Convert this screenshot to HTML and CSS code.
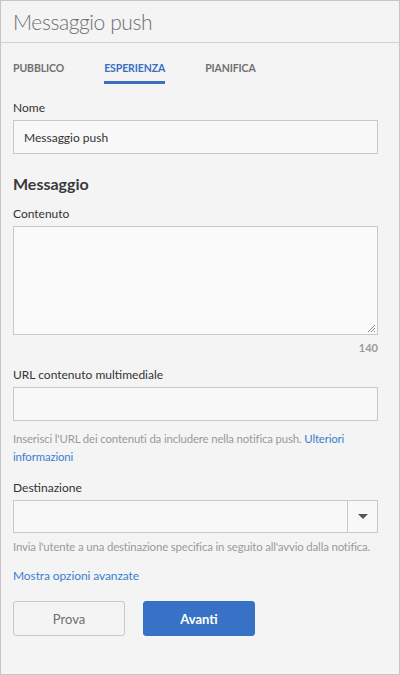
FILE: index.html
```html
<!DOCTYPE html>
<html lang="it">
<head>
<meta charset="utf-8">
<link rel="stylesheet" href="styles.css">
</head>
<body>
<div class="panel">
  <header class="header">
    <h1 class="title">Messaggio push</h1>
  </header>
  <nav class="tabs">
    <span class="tab">PUBBLICO</span>
    <span class="tab active">ESPERIENZA</span>
    <span class="tab">PIANIFICA</span>
  </nav>
  <main class="form">
    <label class="label label-first">Nome</label>
    <div class="input"><span class="value">Messaggio push</span></div>

    <h2 class="section">Messaggio</h2>

    <label class="label label-content">Contenuto</label>
    <div class="textarea">
      <svg class="grip" width="9" height="9" viewBox="0 0 9 9"><path d="M8 1 L1 8 M8 4 L4 8 M8 7 L7 8" stroke="#8a8a8a" stroke-width="1" fill="none"/></svg>
    </div>
    <div class="counter">140</div>

    <label class="label label-url">URL contenuto multimediale</label>
    <div class="input"></div>
    <p class="help">Inserisci l'URL dei contenuti da includere nella notifica push. <a class="link">Ulteriori informazioni</a></p>

    <label class="label label-dest">Destinazione</label>
    <div class="select">
      <div class="select-field"></div>
      <div class="select-btn">
        <svg width="10" height="6" viewBox="0 0 10 6"><path d="M0 0 H10 L5 5 Z" fill="#555"/></svg>
      </div>
    </div>
    <p class="help help-dest">Invia l'utente a una destinazione specifica in seguito all'avvio dalla notifica.</p>

    <a class="link advanced">Mostra opzioni avanzate</a>

    <div class="actions">
      <button class="btn btn-secondary">Prova</button>
      <button class="btn btn-primary">Avanti</button>
    </div>
  </main>
</div>
</body>
</html>
```
FILE: styles.css
```css
* { box-sizing: border-box; }
html, body { margin: 0; padding: 0; }
body {
  font-family: Lato, "Open Sans", sans-serif;
  background: #f4f4f4;
  color: #333;
}
.panel {
  width: 400px;
  height: 675px;
  border: 1px solid #c6c6c6;
  background: #f4f4f4;
  display: flex;
  flex-direction: column;
}
.header {
  height: 42px;
  flex: none;
  border-bottom: 1px solid #d2d2d2;
  display: flex;
  align-items: center;
  padding-left: 12px;
}
.title {
  margin: 0;
  font-size: 21px;
  font-weight: 300;
  color: #6e6e6e;
  letter-spacing: -0.4px;
}
.tabs {
  display: flex;
  padding: 0 12px;
  height: 41px;
  flex: none;
  align-items: stretch;
  gap: 40px;
}
.tab {
  font-size: 10.5px;
  font-weight: 700;
  color: #707070;
  display: flex;
  align-items: center;
  padding-top: 12px;
  border-bottom: 3px solid transparent;
  height: 41px;
  letter-spacing: -0.1px;
}
.tab.active {
  color: #3a6fc4;
  border-bottom-color: #3a6fc4;
}
.form {
  padding: 0 21px 0 12px;
  display: flex;
  flex-direction: column;
}
.label {
  font-size: 12px;
  color: #333;
  line-height: 16px;
  margin-bottom: 4px;
}
.label-first { margin-top: 16px; }
.input {
  height: 34px;
  border: 1px solid #c8c8c8;
  background: #f8f8f8;
  display: flex;
  align-items: center;
  padding-left: 10px;
}
.value { font-size: 12px; color: #333; }
.section {
  margin: 20px 0 0;
  font-size: 16px;
  font-weight: 700;
  color: #3a3a3a;
  line-height: 20px;
}
.label-content { margin-top: 12px; }
.textarea {
  height: 109px;
  border: 1px solid #c8c8c8;
  background: #fafafa;
  position: relative;
}
.grip { position: absolute; right: 1px; bottom: 1px; }
.counter {
  text-align: right;
  font-size: 11px;
  font-weight: 700;
  color: #9a9a9a;
  margin-top: 6px;
  line-height: 14px;
}
.label-url { margin-top: 12px; }
.help {
  margin: 9px 0 0;
  font-size: 11.4px;
  line-height: 18px;
  color: #9a9a9a;
  letter-spacing: -0.15px;
}
.link { color: #3b7fd0; text-decoration: none; }
.label-dest { margin-top: 14px; }
.select {
  height: 33px;
  border: 1px solid #c8c8c8;
  background: #f8f8f8;
  display: flex;
}
.select-field { flex: 1; }
.select-btn {
  width: 30px;
  border-left: 1px solid #c8c8c8;
  display: flex;
  align-items: center;
  justify-content: center;
}
.help-dest { margin-top: 5px; }
.advanced {
  font-size: 12px;
  margin-top: 12px;
  line-height: 16px;
  letter-spacing: -0.1px;
}
.actions {
  display: flex;
  gap: 18px;
  margin-top: 17px;
}
.btn {
  width: 112px;
  height: 35px;
  border-radius: 3px;
  font-family: Lato, "Open Sans", sans-serif;
  font-size: 13px;
  font-weight: 700;
}
.btn-secondary {
  border: 1px solid #c8c8c8;
  background: #f4f4f4;
  color: #6e6e6e;
  font-weight: 400;
}
.btn-primary {
  border: 1px solid #3670c4;
  background: #3872c7;
  color: #fff;
}
```
